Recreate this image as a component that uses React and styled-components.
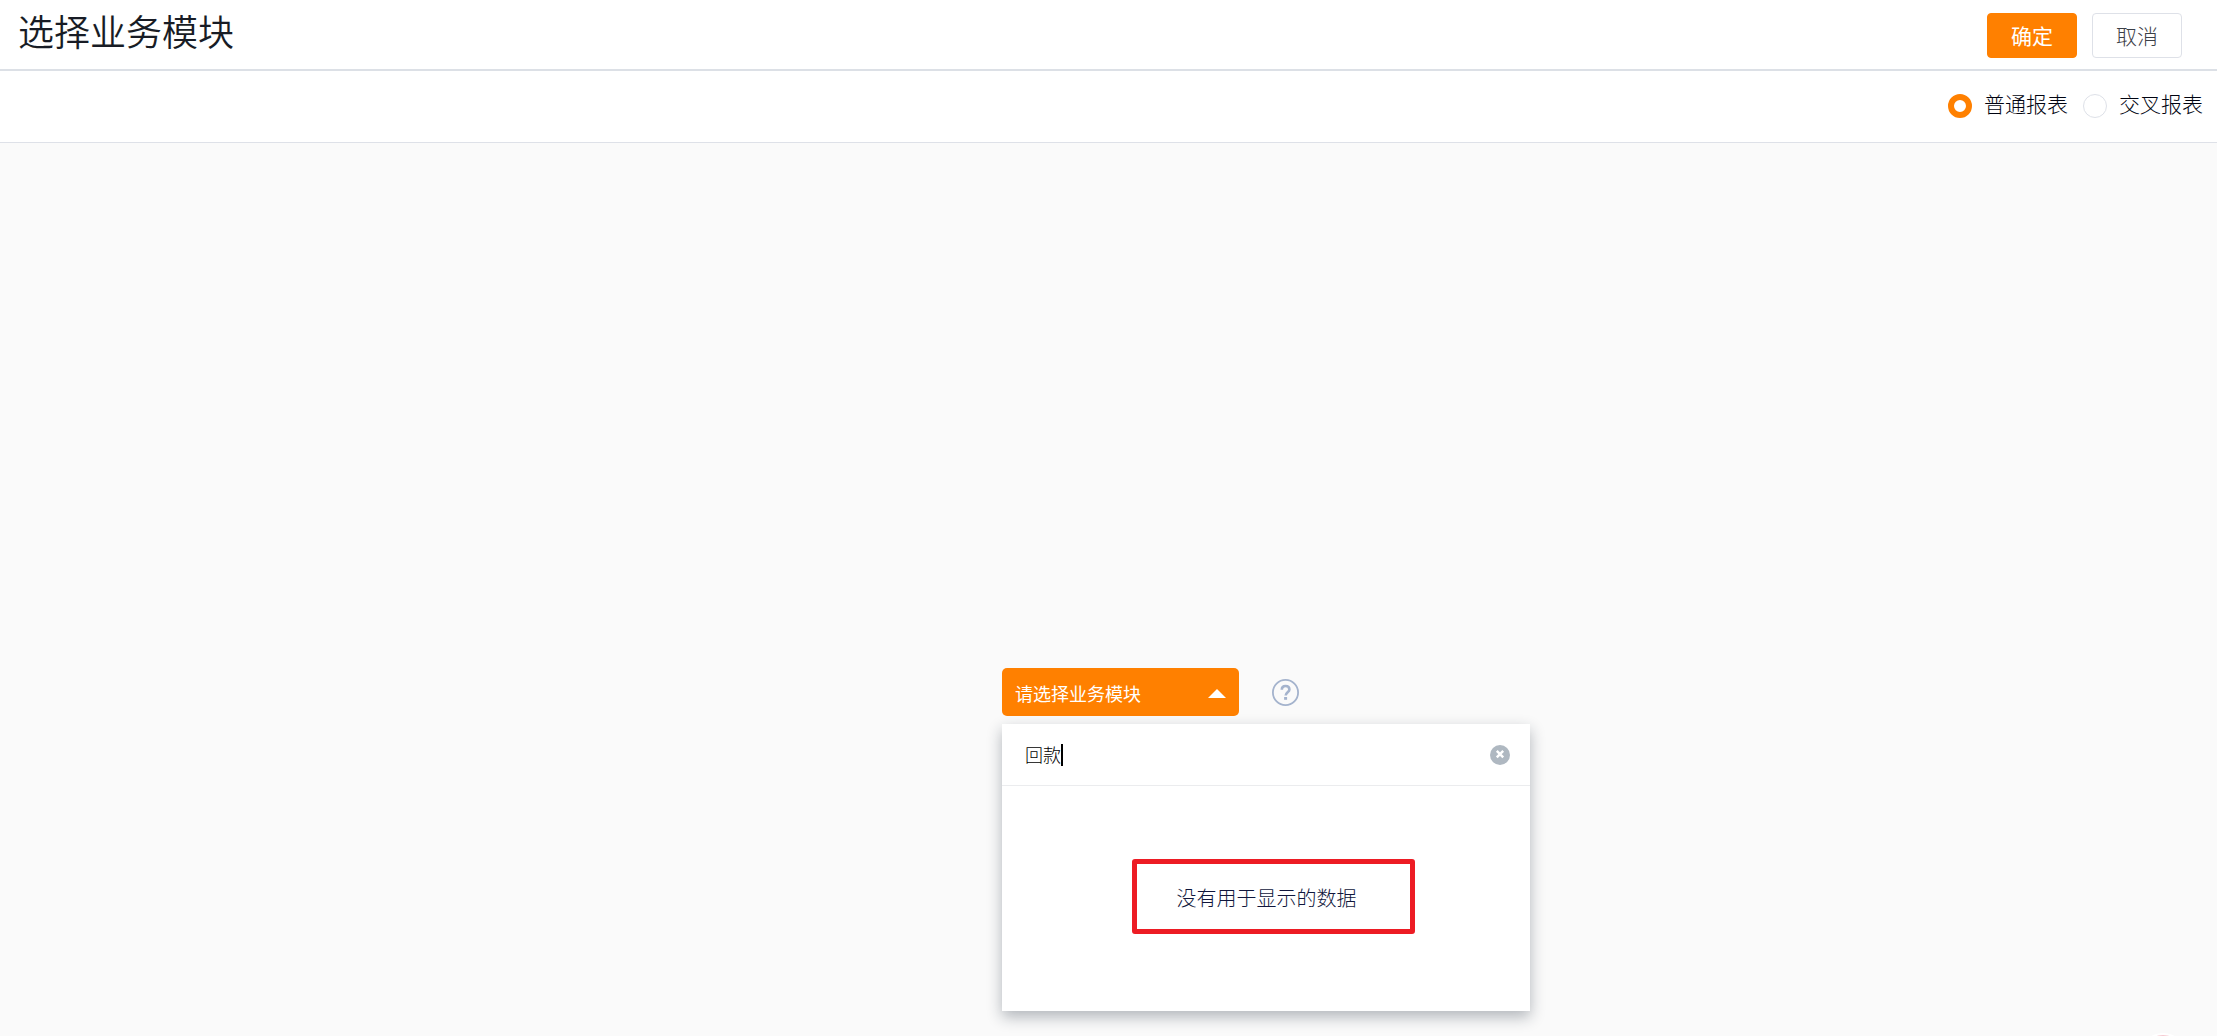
import React, { useState } from 'react'
import styled, { createGlobalStyle, css } from 'styled-components'

const GlobalStyle = createGlobalStyle`
  * {
    box-sizing: border-box;
  }
  body {
    margin: 0;
    background: #fafafa;
  }
  body, button, input {
    font-family: 'Noto Sans CJK SC', sans-serif;
    font-weight: 300;
  }
`

const Page = styled.div`
  display: flex;
  flex-direction: column;
  min-height: 100vh;
  overflow: hidden;
  color: #000310;
`

const Header = styled.header`
  display: flex;
  justify-content: space-between;
  align-items: flex-start;
  padding: 0 35px 0 18px;
  border-bottom: 2px solid #dce0e6;
  background: #fff;
`

const Title = styled.h1`
  margin: 0;
  padding: 2px 0 11px;
  color: #181c25;
  font-size: 36px;
  line-height: 56px;
  font-weight: 350;
`

const Actions = styled.div`
  display: flex;
  gap: 15px;
  padding-top: 13px;
`

const Button = styled.button`
  width: 90px;
  height: 45px;
  padding: 0 0 2px;
  border: 1px solid #dee1e8;
  border-radius: 4px;
  background: #fff;
  color: #3c4048;
  font-size: 21px;
  line-height: 28px;
  cursor: pointer;

  ${props =>
    props.$primary &&
    css`
      border-color: #ff8000;
      background: #ff8000;
      color: #fff;
      font-weight: 400;
    `};
`

const Toolbar = styled.div`
  display: flex;
  justify-content: flex-end;
  gap: 15px;
  padding: 17px 14px 23px;
  border-bottom: 1px solid #dee1e8;
  background: #fff;
`

const RadioLabel = styled.label`
  display: flex;
  align-items: center;
  gap: 12px;
  font-size: 21px;
  line-height: 31px;
  cursor: pointer;
`

const Radio = styled.input`
  appearance: none;
  width: 24px;
  height: 24px;
  margin: 4px 0 0;
  border: 1px solid #dee1e8;
  border-radius: 50%;
  background: #fff;

  &:checked {
    border: 6px solid #ff8000;
  }
`

const Main = styled.main`
  display: flex;
  flex: 1;
  flex-direction: column;
  align-items: flex-start;
  justify-content: flex-end;
  gap: 8px;
  padding: 0 0 25px 45.2%;
`

const PickerRow = styled.div`
  display: flex;
  align-items: center;
  gap: 33px;
`

const PickerButton = styled.button`
  display: flex;
  align-items: center;
  justify-content: space-between;
  width: 237px;
  height: 48px;
  padding: 2px 13px 0;
  border: 0;
  border-radius: 5px;
  background: #ff8000;
  color: #fff;
  font-size: 18px;
  font-weight: 400;
  line-height: 28px;
  cursor: pointer;
`

const IconButton = styled.button`
  display: flex;
  padding: 0;
  border: 0;
  background: none;
  cursor: pointer;
`

const Panel = styled.section`
  width: 528px;
  background: #fff;
  box-shadow: 0 6px 14px rgba(24, 36, 52, 0.32);
`

const SearchRow = styled.div`
  display: flex;
  align-items: center;
  height: 62px;
  padding: 0 20px 0 23px;
  border-bottom: 1px solid #ebecee;
`

const SearchInput = styled.input`
  field-sizing: content;
  padding: 0 0 2px;
  border: 0;
  outline: none;
  background: none;
  color: #000;
  caret-color: transparent;
  font-size: 18px;
  line-height: 28px;
`

const Caret = styled.span`
  width: 2px;
  height: 22px;
  margin-right: auto;
  background: #000;
`

const Empty = styled.div`
  display: flex;
  justify-content: center;
  padding: 73px 0 77px 14px;
`

const EmptyText = styled.p`
  width: 283px;
  margin: 0;
  padding: 19px 40px 16px;
  border: 5px solid #ed1c24;
  border-radius: 3px;
  color: #10163c;
  font-size: 20px;
  line-height: 30px;
  white-space: nowrap;
`

const FloatingDot = styled.div`
  position: fixed;
  right: 30px;
  bottom: -45px;
  width: 48px;
  height: 48px;
  border: 2px solid #fff;
  border-radius: 50%;
  background: #f6c9d0;
`

const ArrowUp = () => (
  <svg width="18" height="9" viewBox="0 0 18 9" aria-hidden="true">
    <path d="M9 0l9 9H0z" fill="#fff" />
  </svg>
)

const HelpIcon = () => (
  <svg width="27" height="27" viewBox="0 0 27 27" fill="none" stroke="#a4b3cd">
    <circle cx="13.5" cy="13.5" r="12.6" strokeWidth="1.8" />
    <path
      d="M9.8 10.8c0-2.3 1.5-3.8 3.8-3.8s3.8 1.4 3.8 3.4c0 2.7-3.7 2.9-3.7 6"
      strokeWidth="2.6"
    />
    <path d="M13.6 18v2.8" strokeWidth="3" />
  </svg>
)

const ClearIcon = () => (
  <svg width="20" height="20" viewBox="0 0 20 20">
    <circle cx="10" cy="10" r="10" fill="#afb8c1" />
    <path d="M6.8 5.8l6.4 6.6M13.2 5.8l-6.4 6.6" stroke="#fff" strokeWidth="2.4" />
  </svg>
)

const reportTypes = ['普通报表', '交叉报表']

const App = () => {
  const [type, setType] = useState(reportTypes[0])
  const [keyword, setKeyword] = useState('回款')
  const [open, setOpen] = useState(true)

  return (
    <Page>
      <GlobalStyle />
      <Header>
        <Title>选择业务模块</Title>
        <Actions>
          <Button type="button" $primary>
            确定
          </Button>
          <Button type="button">取消</Button>
        </Actions>
      </Header>
      <Toolbar>
        {reportTypes.map(name => (
          <RadioLabel key={name}>
            <Radio
              type="radio"
              name="reportType"
              checked={type === name}
              onChange={() => setType(name)}
            />
            {name}
          </RadioLabel>
        ))}
      </Toolbar>
      <Main>
        <PickerRow>
          <PickerButton
            type="button"
            aria-expanded={open}
            onClick={() => setOpen(!open)}
          >
            请选择业务模块
            <ArrowUp />
          </PickerButton>
          <IconButton type="button" aria-label="帮助">
            <HelpIcon />
          </IconButton>
        </PickerRow>
        {open && (
          <Panel>
            <SearchRow>
              <SearchInput
                type="text"
                aria-label="搜索"
                value={keyword}
                onChange={e => setKeyword(e.target.value)}
              />
              <Caret />
              <IconButton
                type="button"
                aria-label="清空"
                onClick={() => setKeyword('')}
              >
                <ClearIcon />
              </IconButton>
            </SearchRow>
            <Empty>
              <EmptyText>没有用于显示的数据</EmptyText>
            </Empty>
          </Panel>
        )}
      </Main>
      <FloatingDot />
    </Page>
  )
}

export default App
